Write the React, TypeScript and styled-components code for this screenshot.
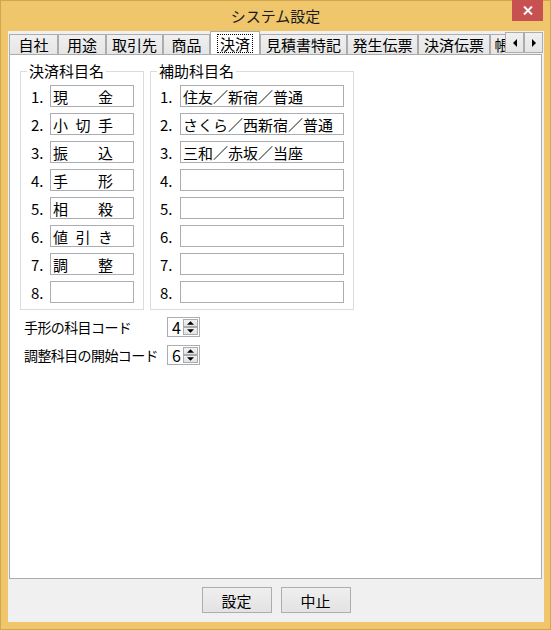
import { createGlobalStyle } from 'styled-components'
import styled from 'styled-components'

const GlobalStyle = createGlobalStyle`
  html, body {
    margin: 0;
    padding: 0;
    background: #ffffff;
  }
  body {
    font-family: 'Noto Sans CJK JP', 'Noto Sans', sans-serif;
    font-size: 15px;
    color: #000000;
  }
`

const Window = styled.div`
  width: 551px;
  height: 630px;
  box-sizing: border-box;
  display: flex;
  flex-direction: column;
  background: #efc66b;
  box-shadow: inset 0 0 0 1px #d3a54c;
`

const TitleBar = styled.div`
  height: 31px;
  flex-shrink: 0;
  display: grid;
  grid-template-columns: 1fr auto 1fr;
  align-items: start;
`

const Title = styled.div`
  grid-column: 2;
  line-height: 31px;
  font-size: 15px;
  color: #1a1a1a;
`

const CloseButton = styled.div`
  grid-column: 3;
  justify-self: end;
  margin-right: 8px;
  width: 31px;
  height: 21px;
  background: #c75050;
  display: flex;
  align-items: center;
  justify-content: center;
`

const Client = styled.div`
  flex: 1;
  margin: 0 7px 8px 8px;
  background: #f0f0f0;
  display: flex;
  flex-direction: column;
`

const TabStrip = styled.div`
  height: 23px;
  flex-shrink: 0;
  display: flex;
  padding-left: 1px;
`

const TabList = styled.div`
  width: 496px;
  display: flex;
  align-items: flex-end;
  overflow: hidden;
`

const Tab = styled.div<{ $w: number; $active?: boolean }>`
  flex-shrink: 0;
  box-sizing: border-box;
  width: ${({ $w }) => $w}px;
  height: ${({ $active }) => ($active ? 24 : 20)}px;
  margin-bottom: ${({ $active }) => ($active ? -1 : 0)}px;
  position: relative;
  z-index: ${({ $active }) => ($active ? 1 : 0)};
  border: 1px solid #acacac;
  border-bottom: none;
  background: ${({ $active }) => ($active ? '#ffffff' : 'linear-gradient(#f0f0f0, #e5e5e5)')};
  display: flex;
  align-items: ${({ $active }) => ($active ? 'flex-start' : 'center')};
  justify-content: center;
  line-height: 18px;
  white-space: nowrap;
  overflow: hidden;
`

const Focus = styled.span`
  margin-top: 2px;
  padding: 0 2px;
  border: 1px dotted #000000;
  line-height: 17px;
`

const ScrollButtons = styled.div`
  display: flex;
  margin-top: 1px;
`

const ScrollButton = styled.div`
  box-sizing: border-box;
  width: 19px;
  height: 21px;
  border: 1px solid #acacac;
  background: linear-gradient(#f0f0f0, #e5e5e5);
  display: flex;
  align-items: center;
  justify-content: center;
`

const Panel = styled.div`
  flex: 1;
  margin: 0 2px 0 1px;
  background: #ffffff;
  border: 1px solid #acacac;
  padding: 8px 10px 0 10px;
  display: flex;
  flex-direction: column;
`

const Groups = styled.div`
  display: flex;
  gap: 6px;
  align-items: flex-start;
`

const Group = styled.fieldset`
  margin: 0;
  padding: 3px 0;
  border: 1px solid #dcdcdc;
  min-inline-size: 0;
`

const Legend = styled.legend`
  margin-left: 6px;
  padding: 0 2px;
  line-height: 16px;
`

const Row = styled.div<{ $pl: number; $pr: number }>`
  height: 28px;
  padding: 0 ${({ $pr }) => $pr}px 0 ${({ $pl }) => $pl}px;
  display: flex;
  align-items: center;
`

const Num = styled.span<{ $w: number }>`
  width: ${({ $w }) => $w}px;
  font-size: 15px;
`

const Field = styled.input<{ $w: number }>`
  box-sizing: border-box;
  width: ${({ $w }) => $w}px;
  height: 22px;
  margin: 0;
  padding: 0 2px;
  border: 1px solid #abadb3;
  font: inherit;
  font-size: 15px;
  color: #000000;
  background: #ffffff;
  outline: none;
`

const Codes = styled.div`
  margin-top: 7px;
  margin-left: 4px;
  display: grid;
  grid-template-columns: 143px auto;
  row-gap: 8px;
  align-items: center;
`

const CodeLabel = styled.span`
  white-space: nowrap;
  font-size: 14px;
  letter-spacing: -0.6px;
`

const Spin = styled.div`
  box-sizing: border-box;
  width: 33px;
  height: 20px;
  border: 1px solid #abadb3;
  display: flex;
  align-items: stretch;
`

const SpinValue = styled.span`
  flex: 1;
  text-align: right;
  padding-right: 2px;
  line-height: 18px;
  font-size: 16px;
`

const SpinButtons = styled.div`
  width: 15px;
  display: flex;
  flex-direction: column;
  padding: 1px 1px 1px 0;
`

const SpinButton = styled.div`
  flex: 1;
  box-sizing: border-box;
  border: 1px solid #acacac;
  background: linear-gradient(#f2f2f2, #e2e2e2);
  display: flex;
  align-items: center;
  justify-content: center;
`

const Footer = styled.div`
  height: 43px;
  flex-shrink: 0;
  display: flex;
  justify-content: center;
  gap: 9px;
  padding-top: 8px;
  box-sizing: border-box;
`

const Button = styled.div`
  box-sizing: border-box;
  width: 70px;
  height: 26px;
  border: 1px solid #adadad;
  background: linear-gradient(#efefef, #e3e3e3);
  display: flex;
  align-items: center;
  justify-content: center;
  font-size: 15px;
`

const tabs = [
  { label: '自社', w: 49 },
  { label: '用途', w: 48 },
  { label: '取引先', w: 57 },
  { label: '商品', w: 47 },
  { label: '決済', w: 50, active: true },
  { label: '見積書特記', w: 87 },
  { label: '発生伝票', w: 71 },
  { label: '決済伝票', w: 72 },
  { label: '帳', w: 24 },
]

// en spaces keep the half-width gaps that the original form shows
const mainItems = ['現　　金', '小\u2002切\u2002手', '振　　込', '手　　形', '相　　殺', '値\u2002引\u2002き', '調　　整', '']
const subItems = ['住友／新宿／普通', 'さくら／西新宿／普通', '三和／赤坂／当座', '', '', '', '', '']

const Triangle = ({ dir }: { dir: 'left' | 'right' | 'up' | 'down' }) => {
  const pts = {
    left: '4,0 4,8 0,4',
    right: '0,0 0,8 4,4',
    up: '0,4 8,4 4,0',
    down: '0,0 8,0 4,4',
  }[dir]
  const horiz = dir === 'left' || dir === 'right'
  return (
    <svg width={horiz ? 4 : 7} height={horiz ? 8 : 4} viewBox={horiz ? '0 0 4 8' : '0 0 8 4'}>
      <polygon points={pts} fill="#000000" />
    </svg>
  )
}

const Spinner = ({ value }: { value: number }) => (
  <Spin>
    <SpinValue>{value}</SpinValue>
    <SpinButtons>
      <SpinButton>
        <Triangle dir="up" />
      </SpinButton>
      <SpinButton>
        <Triangle dir="down" />
      </SpinButton>
    </SpinButtons>
  </Spin>
)

export default function App() {
  return (
    <>
      <GlobalStyle />
      <Window>
        <TitleBar>
          <Title>システム設定</Title>
          <CloseButton>
            <svg width="10" height="9" viewBox="0 0 10 9">
              <path d="M1 0.5 L9 8.5 M9 0.5 L1 8.5" stroke="#ffffff" strokeWidth="2" />
            </svg>
          </CloseButton>
        </TitleBar>
        <Client>
          <TabStrip>
            <TabList>
              {tabs.map((t) => (
                <Tab key={t.label} $w={t.w} $active={t.active}>
                  {t.active ? <Focus>{t.label}</Focus> : t.label}
                </Tab>
              ))}
            </TabList>
            <ScrollButtons>
              <ScrollButton>
                <Triangle dir="left" />
              </ScrollButton>
              <ScrollButton>
                <Triangle dir="right" />
              </ScrollButton>
            </ScrollButtons>
          </TabStrip>
          <Panel>
            <Groups>
              <Group>
                <Legend>決済科目名</Legend>
                {mainItems.map((v, i) => (
                  <Row key={i} $pl={10} $pr={9}>
                    <Num $w={19}>{i + 1}.</Num>
                    <Field $w={84} readOnly value={v} />
                  </Row>
                ))}
              </Group>
              <Group>
                <Legend>補助科目名</Legend>
                {subItems.map((v, i) => (
                  <Row key={i} $pl={9} $pr={9}>
                    <Num $w={20}>{i + 1}.</Num>
                    <Field $w={164} readOnly value={v} />
                  </Row>
                ))}
              </Group>
            </Groups>
            <Codes>
              <CodeLabel>手形の科目コード</CodeLabel>
              <Spinner value={4} />
              <CodeLabel>調整科目の開始コード</CodeLabel>
              <Spinner value={6} />
            </Codes>
          </Panel>
          <Footer>
            <Button>設定</Button>
            <Button>中止</Button>
          </Footer>
        </Client>
      </Window>
    </>
  )
}
